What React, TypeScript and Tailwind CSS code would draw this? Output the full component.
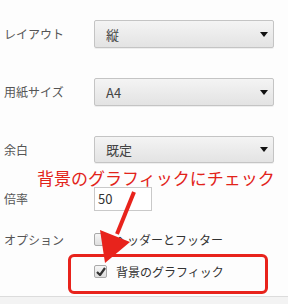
import React from 'react'

const FONT = { fontFamily: '"Noto Sans CJK JP", "Noto Sans", sans-serif' }

function Select({ value, className = '' }: { value: string; className?: string }) {
  return (
    <div
      className={`flex items-center justify-between w-[180px] rounded-[2px] border border-[#c4c4c4] bg-gradient-to-b from-[#f4f4f4] to-[#e3e3e3] pl-[11px] pr-[5px] shadow-[0_1px_0_rgba(0,0,0,0.06)] ${className}`}
    >
      <span className="text-[13px] text-[#444] leading-none">{value}</span>
      <svg width="8" height="5" viewBox="0 0 8 5" className="mr-[0px]">
        <path d="M0 0 H8 L4 5 Z" fill="#111" />
      </svg>
    </div>
  )
}

function Checkbox({ checked }: { checked?: boolean }) {
  return (
    <div className="flex items-center justify-center w-[13px] h-[13px] rounded-[2px] border border-[#a9a9a9] bg-gradient-to-b from-[#f6f6f6] to-[#dedede]">
      {checked && (
        <svg width="10" height="9" viewBox="0 0 10 9">
          <path d="M1 5 L4 8 L9 1" fill="none" stroke="#333" strokeWidth="2.2" strokeLinejoin="round" />
        </svg>
      )}
    </div>
  )
}

function Row({ label, children, className = '' }: { label: string; children: React.ReactNode; className?: string }) {
  return (
    <div className={`flex items-center ${className}`}>
      <div className="w-[94px] pl-[4px] text-[12px] text-[#555]">{label}</div>
      {children}
    </div>
  )
}

export default function App() {
  return (
    <div className="relative flex flex-col w-[288px] h-[304px] bg-[#fdfdfd] overflow-hidden" style={FONT}>
      <div className="flex-1 flex flex-col pt-[20px]">
        <Row label="レイアウト" className="h-[28px]">
          <Select value="縦" className="h-[28px]" />
        </Row>
        <Row label="用紙サイズ" className="h-[28px] mt-[30px]">
          <Select value="A4" className="h-[28px]" />
        </Row>
        <Row label="余白" className="h-[27px] mt-[30px]">
          <Select value="既定" className="h-[27px]" />
        </Row>

        <div className="mt-[6px] h-[18px] pl-[37px] text-[17px] leading-[18px] text-[#e2231a] whitespace-nowrap">
          背景のグラフィックにチェック
        </div>

        <Row label="倍率" className="h-[24px]">
          <div className="flex items-center w-[58px] h-[24px] border border-[#c9c9c9] bg-white pl-[3px] text-[13px] text-[#333]">
            50
          </div>
        </Row>

        <Row label="オプション" className="h-[13px] mt-[22px]">
          <div className="flex items-center gap-[8px]">
            <Checkbox />
            <span className="text-[12px] text-[#333] leading-none">ヘッダーとフッター</span>
          </div>
        </Row>
        <div className="flex items-center h-[13px] mt-[19px] pl-[94px] gap-[9px]">
          <Checkbox checked />
          <span className="text-[12px] text-[#333] leading-none">背景のグラフィック</span>
        </div>
      </div>
      <div className="h-[8px] border-t border-[#dcdcdc] bg-[#f3f3f3]" />

      {/* annotation box */}
      <div className="absolute left-[68px] top-[254px] w-[200px] h-[40px] rounded-[6px] border-[3px] border-[#e8231c]" />

      {/* annotation arrow */}
      <svg className="absolute inset-0 pointer-events-none" width="288" height="304" viewBox="0 0 288 304">
        <line x1="134" y1="192" x2="117" y2="234" stroke="#e8231c" strokeWidth="4" />
        <polygon points="105,263 100,230 130,242" fill="#e8231c" />
      </svg>
    </div>
  )
}
